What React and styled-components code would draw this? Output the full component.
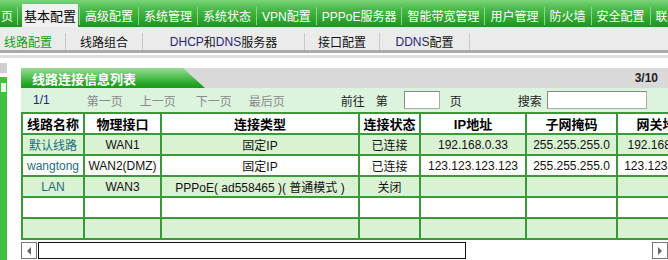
import React from 'react';
import styled, { createGlobalStyle } from 'styled-components';

const Global = createGlobalStyle`
  html, body {
    margin: 0;
    padding: 0;
    background: #fff;
  }
  body {
    font-family: "Liberation Sans", "Noto Sans CJK SC", sans-serif;
    font-size: 12px;
    color: #111;
  }
`;

const Page = styled.div`
  width: 668px;
  height: 260px;
  overflow: hidden;
  display: flex;
  flex-direction: column;
`;

const TopNav = styled.div`
  height: 27px;
  flex: none;
  display: flex;
  align-items: flex-end;
  background: linear-gradient(#7ad47a 0%, #49b949 35%, #2fa72f 70%, #1f931f 100%);
  white-space: nowrap;
  overflow: hidden;
`;

const NavItem = styled.div`
  height: 23px;
  display: flex;
  align-items: center;
  padding: ${p => p.$pad || '0 5px'};
  margin: ${p => p.$margin || '0'};
  color: ${p => (p.$active ? '#000' : '#fff')};
  background: ${p => (p.$active ? '#f1f1f1' : 'transparent')};
  font-size: ${p => (p.$active ? '13px' : '12px')};
  flex: none;
`;

const NavSep = styled.div`
  width: 1px;
  height: 18px;
  margin-bottom: 2px;
  align-self: flex-end;
  background: #8cd48c;
  flex: none;
`;

const SubNav = styled.div`
  height: 23px;
  flex: none;
  display: flex;
  align-items: center;
  background: #ebebeb;
  border-bottom: 3px solid #a9a9a9;
  white-space: nowrap;
`;

const SubItem = styled.div`
  width: ${p => p.$w}px;
  height: 17px;
  margin-top: 6px;
  display: flex;
  align-items: center;
  justify-content: ${p => (p.$left ? 'flex-start' : 'center')};
  padding-left: ${p => (p.$left ? '4px' : '0')};
  box-sizing: border-box;
  border-right: 1px solid #c9c9c9;
  color: ${p => (p.$active ? '#1a9a1a' : '#111')};
  font-size: 12px;
  flex: none;
`;

const Navy = styled.span`
  color: #26266e;
`;

const Divider = styled.div`
  height: 3px;
  margin-top: 2px;
  flex: none;
  background: #dedede;
`;

const Content = styled.div`
  flex: 1;
  display: flex;
  gap: 14px;
  min-height: 0;
`;

const Strip = styled.div`
  width: 7px;
  flex: none;
  display: flex;
  flex-direction: column;
  gap: 4px;
  padding-top: 5px;
`;

const StripCap = styled.div`
  height: 10px;
  background: #cfcfcf;
`;

const StripBody = styled.div`
  flex: 1;
  background: #3fc23f;
  position: relative;
  &::after {
    content: '';
    position: absolute;
    left: 1px;
    top: 6px;
    width: 5px;
    height: 9px;
    background: #e9f8e9;
  }
`;

const Panel = styled.div`
  flex: 1;
  min-width: 0;
  padding-top: 10px;
  display: flex;
  flex-direction: column;
`;

const TitleBar = styled.div`
  height: 20px;
  flex: none;
  display: flex;
  align-items: center;
  justify-content: space-between;
  background: #d9d9d9;
`;

const TitleShape = styled.div`
  width: 184px;
  height: 20px;
  display: flex;
  align-items: center;
  padding-left: 11px;
  box-sizing: border-box;
  clip-path: polygon(0 0, 162px 0, 100% 100%, 0 100%);
  background: linear-gradient(#95dc95 0%, #5cc45c 40%, #2aa92a 75%, #1a981a 100%);
  color: #fff;
  font-weight: bold;
  font-size: 13px;
`;

const PageCount = styled.div`
  padding-right: 10px;
  font-weight: bold;
  font-size: 12px;
  color: #222;
`;

const Pager = styled.div`
  height: 24px;
  flex: none;
  display: flex;
  align-items: center;
  background: #dcf4dd;
  white-space: nowrap;
  padding-left: 12px;
`;

const PagerText = styled.span`
  margin-left: ${p => p.$ml || 0}px;
  color: ${p => p.$color || '#222'};
`;

const PagerInput = styled.input`
  width: ${p => p.$w}px;
  height: 18px;
  margin-left: ${p => p.$ml}px;
  padding: 0;
  box-sizing: border-box;
  border: 1px solid #aaa;
  border-top-color: #888;
  border-left-color: #888;
  background: #fff;
`;

const TableBox = styled.div`
  overflow: hidden;
`;

const Table = styled.table`
  border-collapse: collapse;
  table-layout: fixed;
  width: 778px;
  border: 2px solid #3a9a3a;
  font-size: 12px;
`;

const Th = styled.th`
  height: 19px;
  padding: 0;
  border: 2px solid #3a9a3a;
  background: #fff;
  font-size: 13px;
  font-weight: bold;
  color: #000;
  text-align: center;
  white-space: nowrap;
  overflow: hidden;
`;

const Row = styled.tr`
  background: ${p => (p.$alt ? '#d9f2d1' : '#fff')};
`;

const Td = styled.td`
  height: 19px;
  padding: 0;
  border: 2px solid #3a9a3a;
  text-align: center;
  white-space: nowrap;
  overflow: hidden;
  color: ${p => (p.$link ? '#1c6e7e' : '#111')};
`;

const ScrollBar = styled.div`
  height: 17px;
  margin-top: 2px;
  display: flex;
  flex: none;
`;

const ScrollBtn = styled.div`
  width: 16px;
  height: 17px;
  box-sizing: border-box;
  border: 1px solid #777;
  background: #fff;
  display: flex;
  align-items: center;
  justify-content: center;
  flex: none;
`;

const Thumb = styled.div`
  width: 428px;
  height: 17px;
  margin-left: 1px;
  box-sizing: border-box;
  border: 1px solid #111;
  background: #fff;
`;

const Track = styled.div`
  flex: 1;
`;

const Arrow = ({ dir }) => (
  <svg width="6" height="8" viewBox="0 0 6 8">
    {dir === 'left'
      ? <polygon points="5,0 5,8 1,4" fill="#666" />
      : <polygon points="1,0 1,8 5,4" fill="#666" />}
  </svg>
);

const tabs = ['高级配置', '系统管理', '系统状态', 'VPN配置', 'PPPoE服务器', '智能带宽管理', '用户管理', '防火墙', '安全配置', '联动管理'];

const cols = [62, 77, 198, 61, 106, 91, 91, 92];

const rows = [
  ['默认线路', 'WAN1', '固定IP', '已连接', '192.168.0.33', '255.255.255.0', '192.168.10.1', '202.96.128.86'],
  ['wangtong', 'WAN2(DMZ)', '固定IP', '已连接', '123.123.123.123', '255.255.255.0', '123.123.123.1', '202.96.128.86'],
  ['LAN', 'WAN3', 'PPPoE( ad558465 )( 普通模式 )', '关闭', '', '', '', ''],
  ['', '', '', '', '', '', '', ''],
  ['', '', '', '', '', '', '', ''],
];

export default function App() {
  return (
    <Page>
      <Global />
      <TopNav>
        <NavItem $pad="0 4px 0 1px">页</NavItem>
        <NavSep />
        <NavItem $active $pad="0 2px" $margin="0 1px 0 4px">基本配置</NavItem>
        {tabs.map(t => (
          <React.Fragment key={t}>
            <NavSep />
            <NavItem>{t}</NavItem>
          </React.Fragment>
        ))}
      </TopNav>
      <SubNav>
        <SubItem $w={66} $left $active>线路配置</SubItem>
        <SubItem $w={77}>线路组合</SubItem>
        <SubItem $w={162}><Navy>DHCP</Navy>和<Navy>DNS</Navy>服务器</SubItem>
        <SubItem $w={75}>接口配置</SubItem>
        <SubItem $w={90}><Navy>DDNS</Navy>配置</SubItem>
      </SubNav>
      <Divider />
      <Content>
        <Strip>
          <StripCap />
          <StripBody />
        </Strip>
        <Panel>
          <TitleBar>
            <TitleShape>线路连接信息列表</TitleShape>
            <PageCount>3/10</PageCount>
          </TitleBar>
          <Pager>
            <PagerText $color="#22227a">1/1</PagerText>
            <PagerText $ml={37} $color="#8a8a8a">第一页</PagerText>
            <PagerText $ml={17} $color="#8a8a8a">上一页</PagerText>
            <PagerText $ml={20} $color="#8a8a8a">下一页</PagerText>
            <PagerText $ml={17} $color="#8a8a8a">最后页</PagerText>
            <PagerText $ml={56}>前往</PagerText>
            <PagerText $ml={11}>第</PagerText>
            <PagerInput $w={36} $ml={16} />
            <PagerText $ml={10}>页</PagerText>
            <PagerText $ml={56}>搜索</PagerText>
            <PagerInput $w={100} $ml={5} />
          </Pager>
          <TableBox>
            <Table>
              <colgroup>
                {cols.map((w, i) => <col key={i} style={{ width: w }} />)}
              </colgroup>
              <thead>
                <tr>
                  <Th>线路名称</Th>
                  <Th>物理接口</Th>
                  <Th>连接类型</Th>
                  <Th>连接状态</Th>
                  <Th>IP地址</Th>
                  <Th>子网掩码</Th>
                  <Th>网关地址</Th>
                  <Th>DNS服务器</Th>
                </tr>
              </thead>
              <tbody>
                {rows.map((r, i) => (
                  <Row key={i} $alt={i % 2 === 0}>
                    {r.map((c, j) => (
                      <Td key={j} $link={j === 0}>{c}</Td>
                    ))}
                  </Row>
                ))}
              </tbody>
            </Table>
          </TableBox>
          <ScrollBar>
            <ScrollBtn><Arrow dir="left" /></ScrollBtn>
            <Thumb />
            <Track />
            <ScrollBtn><Arrow dir="right" /></ScrollBtn>
          </ScrollBar>
        </Panel>
      </Content>
    </Page>
  );
}
